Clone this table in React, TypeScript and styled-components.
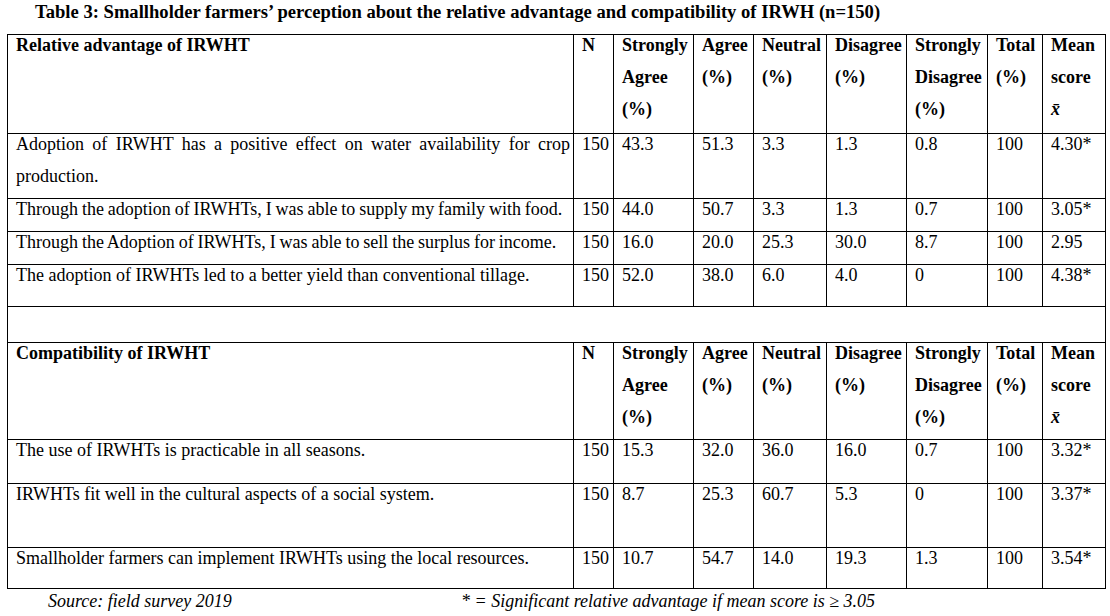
import { FC, Fragment } from 'react'
import styled, { createGlobalStyle } from 'styled-components'

const GlobalStyle = createGlobalStyle`
  html, body {
    margin: 0;
    padding: 0;
    background: #fff;
  }
  body {
    font-family: "Liberation Serif", "Times New Roman", serif;
    color: #000;
  }
`

const Page = styled.div`
  width: 1110px;
  padding: 0 0 0 7px;
  box-sizing: border-box;
`

const Title = styled.h1`
  margin: 0;
  padding: 0 0 0 28px;
  height: 34px;
  font-size: 18.6px;
  line-height: 24px;
  font-weight: bold;
`

const Table = styled.table`
  border-collapse: collapse;
  table-layout: fixed;
  width: 1099px;
  font-size: 18px;
`

const Row = styled.tr<{ $h: number }>`
  height: ${({ $h }) => $h}px;
`

const Cell = styled.td<{ $justify?: boolean; $tight?: boolean }>`
  border: 1px solid #000;
  padding: 0 ${({ $justify }) => ($justify ? 3 : 4)}px 0 8px;
  vertical-align: top;
  line-height: 32px;
  text-align: ${({ $justify }) => ($justify ? 'justify' : 'left')};
  word-spacing: ${({ $tight }) => ($tight ? '-0.6px' : 'normal')};
`

const HeadCell = styled(Cell).attrs({ as: 'th' })`
  font-weight: bold;
`

const Inner = styled.div`
  margin: -6px 0 6px;
`

const XBar = styled.span`
  font-style: italic;
  font-weight: bold;
`

const Footer = styled.div`
  display: grid;
  grid-template-columns: 413px auto;
  padding: 0 0 0 41px;
  font-style: italic;
  font-size: 18px;
  line-height: 24px;
`

type TRow = {
  label: string
  values: string[]
  h: number
  tight?: boolean
}

type TSection = {
  title: string
  headH: number
  rows: TRow[]
}

const sections: TSection[] = [
  {
    title: 'Relative advantage of IRWHT',
    headH: 99,
    rows: [
      { label: 'Adoption of IRWHT has a positive effect on water availability for crop production.', values: ['150', '43.3', '51.3', '3.3', '1.3', '0.8', '100', '4.30*'], h: 63 },
      { label: 'Through the adoption of IRWHTs, I was able to supply my family with food.', values: ['150', '44.0', '50.7', '3.3', '1.3', '0.7', '100', '3.05*'], h: 33, tight: true },
      { label: 'Through the Adoption of IRWHTs, I was able to sell the surplus for income.', values: ['150', '16.0', '20.0', '25.3', '30.0', '8.7', '100', '2.95'], h: 33, tight: true },
      { label: 'The adoption of IRWHTs led to a better yield than conventional tillage.', values: ['150', '52.0', '38.0', '6.0', '4.0', '0', '100', '4.38*'], h: 42 },
    ],
  },
  {
    title: 'Compatibility of IRWHT',
    headH: 97,
    rows: [
      { label: 'The use of IRWHTs is practicable in all seasons.', values: ['150', '15.3', '32.0', '36.0', '16.0', '0.7', '100', '3.32*'], h: 44 },
      { label: 'IRWHTs fit well in the cultural aspects of a social system.', values: ['150', '8.7', '25.3', '60.7', '5.3', '0', '100', '3.37*'], h: 64 },
      { label: 'Smallholder farmers can implement IRWHTs using the local resources.', values: ['150', '10.7', '54.7', '14.0', '19.3', '1.3', '100', '3.54*'], h: 41 },
    ],
  },
]

const widths = [566, 40, 80, 60, 73, 80, 81, 55, 63]

const HeaderRow: FC<{ title: string; h: number }> = ({ title, h }) => (
  <Row $h={h}>
    <HeadCell><Inner>{title}</Inner></HeadCell>
    <HeadCell><Inner>N</Inner></HeadCell>
    <HeadCell><Inner>Strongly<br />Agree<br />(%)</Inner></HeadCell>
    <HeadCell><Inner>Agree<br />(%)</Inner></HeadCell>
    <HeadCell><Inner>Neutral<br />(%)</Inner></HeadCell>
    <HeadCell><Inner>Disagree<br />(%)</Inner></HeadCell>
    <HeadCell><Inner>Strongly<br />Disagree<br />(%)</Inner></HeadCell>
    <HeadCell><Inner>Total<br />(%)</Inner></HeadCell>
    <HeadCell><Inner>Mean<br />score<br /><XBar>x&#772;</XBar></Inner></HeadCell>
  </Row>
)

const App: FC = () => (
  <Page>
    <GlobalStyle />
    <Title>Table 3: Smallholder farmers’ perception about the relative advantage and compatibility of IRWH (n=150)</Title>
    <Table>
      <colgroup>
        {widths.map((w, i) => <col key={i} style={{ width: w }} />)}
      </colgroup>
      <tbody>
        {sections.map((s, si) => (
          <Fragment key={s.title}>
            {si > 0 && (
              <Row $h={36}>
                <Cell colSpan={9} />
              </Row>
            )}
            <HeaderRow title={s.title} h={s.headH} />
            {s.rows.map((r) => (
              <Row $h={r.h} key={r.label}>
                <Cell $justify $tight={r.tight}><Inner>{r.label}</Inner></Cell>
                {r.values.map((v, vi) => (
                  <Cell key={vi}><Inner>{v}</Inner></Cell>
                ))}
              </Row>
            ))}
          </Fragment>
        ))}
      </tbody>
    </Table>
    <Footer>
      <span>Source: field survey 2019</span>
      <span>* = Significant relative advantage if mean score is ≥ 3.05</span>
    </Footer>
  </Page>
)

export default App
